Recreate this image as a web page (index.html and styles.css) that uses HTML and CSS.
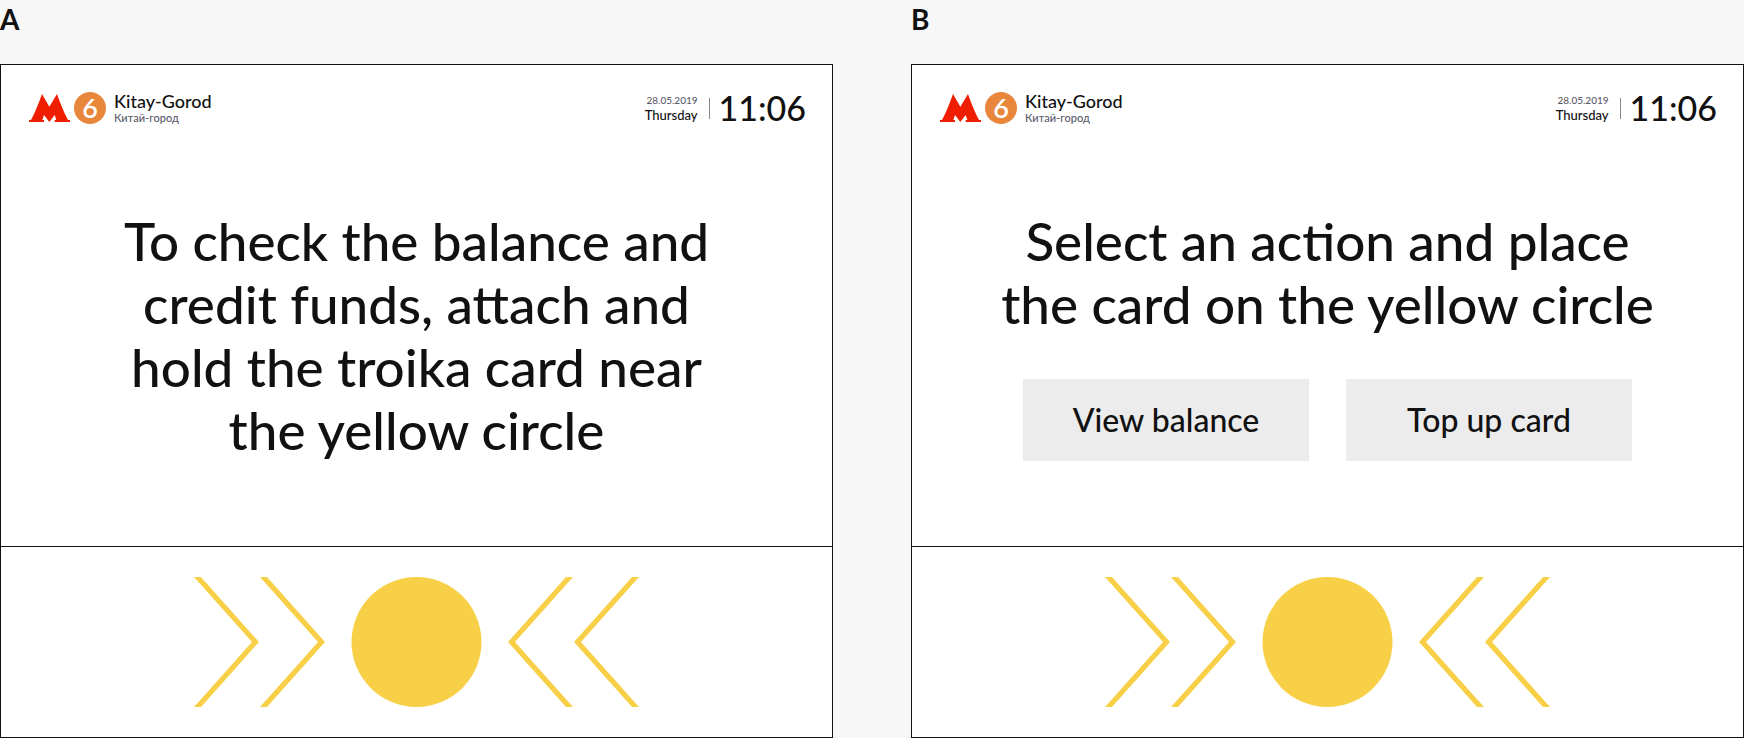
FILE: index.html
```html
<!DOCTYPE html>
<html lang="en">
<head>
<meta charset="utf-8">
<title>Troika card terminal</title>
<link rel="stylesheet" href="styles.css">
</head>
<body>
<svg class="defs" aria-hidden="true">
  <symbol id="metro" viewBox="0 0 123 84"><path fill="#f01e00" d="M0 84v-6h6C18 57 29 28 39 0l22 38L84 0c10 28 21 57 33 78h6v6H77v-6h5l-5-15-16 21-16-21-5 15h5v6z"/></symbol>
  <symbol id="target" viewBox="0 0 445 130">
    <g fill="#f8d047">
      <path d="M0 0h7l58 65-58 65H0l58-65z"/>
      <path d="M66 0h7l58 65-58 65h-7l58-65z"/>
      <circle cx="222.500" cy="65" r="65"/>
      <path d="M379 0h-7l-58 65 58 65h7l-58-65z"/>
      <path d="M445 0h-7l-58 65 58 65h7l-58-65z"/>
    </g>
  </symbol>
</svg>
<main class="boards">
  <section class="board">
    <h2 class="label">A</h2>
    <div class="screen">
      <header class="bar">
        <svg class="metro" role="img" aria-label="Metro"><use href="#metro"/></svg>
        <span class="line">6</span>
        <div class="station"><span class="name">Kitay-Gorod</span><span class="local" lang="ru">Китай-город</span></div>
        <div class="day"><span class="date">28.05.2019</span><span class="weekday">Thursday</span></div>
        <time class="clock">11:06</time>
      </header>
      <div class="content">
        <h1 class="message">To check the balance and<br>credit funds, attach and<br>hold the troika card near<br>the yellow circle</h1>
      </div>
      <footer class="reader"><svg class="target" role="img" aria-label="Card reader"><use href="#target"/></svg></footer>
    </div>
  </section>
  <section class="board">
    <h2 class="label">B</h2>
    <div class="screen">
      <header class="bar">
        <svg class="metro" role="img" aria-label="Metro"><use href="#metro"/></svg>
        <span class="line">6</span>
        <div class="station"><span class="name">Kitay-Gorod</span><span class="local" lang="ru">Китай-город</span></div>
        <div class="day"><span class="date">28.05.2019</span><span class="weekday">Thursday</span></div>
        <time class="clock">11:06</time>
      </header>
      <div class="content">
        <h1 class="message">Select an action and place<br>the card on the yellow circle</h1>
        <div class="actions">
          <button class="action" type="button">View balance</button>
          <button class="action" type="button">Top up card</button>
        </div>
      </div>
      <footer class="reader"><svg class="target" role="img" aria-label="Card reader"><use href="#target"/></svg></footer>
    </div>
  </section>
</main>
</body>
</html>
```
FILE: styles.css
```css
* { box-sizing: border-box; }
body {
  margin: 0;
  background: #f7f7f7;
  color: #111;
  font-family: Lato, "Noto Sans", sans-serif;
  font-weight: 500;
}
.defs { display: none; }
.boards {
  display: grid;
  grid-template-columns: 1fr 1fr;
  column-gap: 78px;
  min-height: 100vh;
}
.board { display: flex; flex-direction: column; }
.label {
  margin: 0;
  height: 64px;
  padding-top: 2px;
  font-size: 28px;
  line-height: 34px;
  font-weight: 700;
}
.screen {
  flex: 1;
  display: flex;
  flex-direction: column;
  border: 1px solid #111;
  background: #fff;
}
.bar {
  display: flex;
  align-items: center;
  height: 86px;
  padding: 0 26px 0 28px;
}
.metro { width: 41px; height: 28px; margin-right: 4px; }
.line {
  width: 32px;
  height: 32px;
  border-radius: 50%;
  background: #e8873c;
  color: #fff;
  font-size: 27px;
  font-weight: 600;
  line-height: 32px;
  text-align: center;
}
.station { display: flex; flex-direction: column; margin-left: 8px; }
.name { font-size: 18px; line-height: 20px; }
.local { font-size: 11px; line-height: 14px; color: #5b5b6b; }
.day {
  display: flex;
  flex-direction: column;
  margin-left: auto;
  text-align: right;
}
.date { font-size: 10px; line-height: 14px; color: #5b5b6b; }
.weekday { font-size: 13px; line-height: 16px; }
.clock { display: flex; align-items: center; font-size: 34px; line-height: 40px; }
.clock::before {
  content: "";
  width: 1px;
  height: 21px;
  margin: 0 9px 0 11px;
  background: #888;
}
.content {
  flex: 1;
  display: flex;
  flex-direction: column;
  align-items: center;
  padding-top: 58px;
}
.message {
  margin: 0;
  font-size: 53px;
  line-height: 63px;
  font-weight: 500;
  text-align: center;
  white-space: nowrap;
}
.actions { display: flex; gap: 37px; margin-top: 44px; }
.action {
  width: 286px;
  padding: 21px 0;
  border: 0;
  background: #ececec;
  color: inherit;
  font: inherit;
  font-size: 32px;
  line-height: 40px;
}
.reader {
  display: flex;
  justify-content: center;
  padding: 30px 0;
  border-top: 1px solid #111;
}
.target { width: 445px; height: 130px; }
```
